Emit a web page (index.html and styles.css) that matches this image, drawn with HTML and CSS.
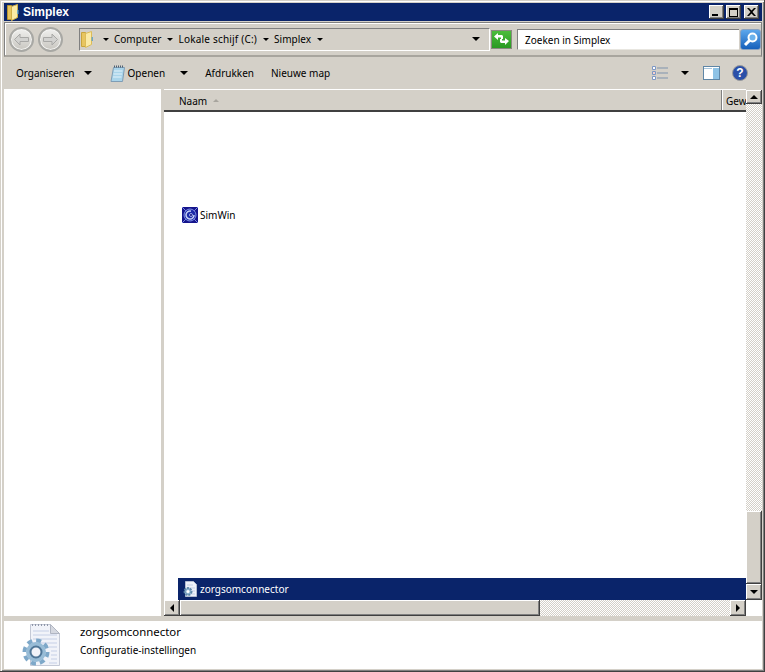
FILE: index.html

```html
<!DOCTYPE html>
<html lang="nl">

<head>
    <meta charset="UTF-8">
    <meta name="viewport" content="width=device-width, initial-scale=1.0">
    <title>Simplex</title>
    <link rel="stylesheet" href="styles.css">
</head>

<body>
    <div class="venster">
        <!-- Titelbalk -->
        <header class="titelbalk">
            <svg class="map-klein" width="12" height="17" viewBox="0 0 12 17">
                <path d="M.5 1.500h4v14h-4z" fill="#e8c560" stroke="#b8952f" />
                <path d="M4.500 2.500l6-2v13l-6 3z" fill="#fbeaa6" stroke="#d1ae48" />
                <path d="M10 6h1.500v4H10z" fill="#6ea7c4" />
            </svg>
            <span class="titel">Simplex</span>
            <div class="vensterknoppen">
                <button class="vknop"><span class="min"></span></button>
                <button class="vknop"><span class="max"></span></button>
                <button class="vknop sluit">
                    <svg width="9" height="8" viewBox="0 0 9 8">
                        <path d="M0 0h2l2.500 2.500L7 0h2L5.500 4 9 8H7L4.500 5.500 2 8H0l3.500-4z" fill="#000" />
                    </svg>
                </button>
            </div>
        </header>

        <!-- Adresbalk -->
        <div class="adresbalk">
            <div class="navknoppen">
                <span class="rondknop">
                    <svg width="17" height="13" viewBox="0 0 17 13"><path d="M1.500 6.500L7 1v3.500h8.500v4H7V12z" fill="#d2d2d0" stroke="#a8a8a6" /></svg>
                </span>
                <span class="rondknop">
                    <svg width="17" height="13" viewBox="0 0 17 13"><path d="M15.500 6.500L10 1v3.500H1.500v4H10V12z" fill="#d2d2d0" stroke="#a8a8a6" /></svg>
                </span>
            </div>
            <div class="pad">
                <svg class="map-pad" width="13" height="17" viewBox="0 0 13 17">
                    <path d="M.5 1.500h4v14h-4z" fill="#e8c560" stroke="#c9a53c" />
                    <path d="M4.500 2.500l6-2v13l-6 3z" fill="#fbeaa6" stroke="#dcbc58" />
                    <path d="M10.500 6H12v4h-1.500z" fill="#6ea7c4" />
                </svg>
                <span class="pijl pad-pijl"></span><span class="kruimel">Computer</span>
                <span class="pijl pad-pijl"></span><span class="kruimel kruimel-schijf">Lokale schijf (C:)</span>
                <span class="pijl pad-pijl"></span><span class="kruimel">Simplex</span>
                <span class="pijl pad-pijl"></span>
                <span class="pijl pad-einde"></span>
            </div>
            <span class="ververs">
                <svg width="17" height="14" viewBox="0 0 17 14">
                    <path d="M1 4.500L5 1v2h4l1 1v3H8V5.500H5V8z" fill="#fff" />
                    <path d="M16 9l-4 4v-2H8L7 10V7h2v1.500h3V6z" fill="#fff" />
                </svg>
            </span>
            <div class="zoeken">Zoeken in Simplex</div>
            <span class="zoekknop">
                <svg width="17" height="17" viewBox="0 0 17 17">
                    <circle cx="10.500" cy="6.500" r="4" fill="#6cb2ec" stroke="#fff" stroke-width="2" />
                    <path d="M7.500 9.500L3 14" stroke="#fff" stroke-width="3" />
                </svg>
            </span>
        </div>

        <!-- Werkbalk -->
        <nav class="werkbalk">
            <span class="wk-item">Organiseren</span>
            <span class="pijl wk-pijl"></span>
            <svg class="notitie" width="15" height="17" viewBox="0 0 15 17">
                <path d="M3.500 2.500h11l-2 14H1z" fill="#a9d4ea" stroke="#7f9db5" />
                <path d="M4 6h8.500M3.500 9H12M3 12h8.500" stroke="#e4f2fa" />
                <path d="M4 1.500h10" stroke="#4d5f72" stroke-dasharray="1 1" stroke-width="2" />
            </svg>
            <span class="wk-item openen">Openen</span>
            <span class="pijl wk-pijl"></span>
            <span class="wk-item afdrukken">Afdrukken</span>
            <span class="wk-item">Nieuwe map</span>
            <div class="wk-rechts">
                <svg width="16" height="14" viewBox="0 0 16 14">
                    <path d="M.5 .5h3v3h-3zM.5 5.500h3v3h-3zM.5 10.500h3v3h-3z" fill="#fff" stroke="#7d97c4" />
                    <path d="M1.500 6.500h1v1h-1z" fill="#d84a3c" />
                    <path d="M5 2h11M5 7h11M5 12h11" stroke="#7f93ad" />
                </svg>
                <span class="pijl weergave-pijl"></span>
                <svg class="paneel" width="17" height="14" viewBox="0 0 17 14">
                    <rect x="0.500" y="0.500" width="16" height="13" fill="#fff" stroke="#5f86a6" />
                    <rect x="10" y="2" width="6" height="11" fill="#8fc3e6" />
                    <path d="M1 2.500h8" stroke="#a9c6dc" />
                </svg>
                <span class="help">?</span>
            </div>
        </nav>

        <!-- Inhoud -->
        <main class="inhoud">
            <aside class="zijbalk"></aside>
            <section class="lijst">
                <div class="lijst-midden">
                    <div class="bestanden">
                        <div class="kolomkop">
                            <div class="kop kop-naam">Naam <span class="sorteer"></span></div>
                            <div class="kop kop-gew">Gew</div>
                        </div>
                        <div class="rijen">
                            <div class="rij rij-simwin">
                                <svg width="16" height="16" viewBox="0 0 16 16">
                                    <rect width="16" height="16" fill="#14148c" />
                                    <path d="M0 0l4 4M16 0l-4 4M0 16l4-4M16 16l-4-4" stroke="#7b88e0" />
                                    <circle cx="8" cy="8" r="6" fill="#1c2aa8" stroke="#7f90e4" />
                                    <path d="M12 8a4 4 0 1 1-3-3.800" fill="none" stroke="#c5cff5" stroke-width="1.500" />
                                    <circle cx="9" cy="8" r="1.500" fill="#0c0c70" stroke="#9aa8ec" />
                                </svg>
                                <span>SimWin</span>
                            </div>
                            <div class="rij rij-zorg">
                                <svg width="16" height="16" viewBox="0 0 16 16">
                                    <path d="M3.500 .5h8l3 3v12h-11z" fill="#eef2fa" stroke="#b3bcd0" />
                                    <path d="M5 4h6M7 7h6M9 10h4M9 13h4" stroke="#c5cfe6" />
                                    <circle cx="6" cy="10.500" r="3.500" fill="#8fb4d1" stroke="#5f88a8" stroke-width="2" stroke-dasharray="2 1" />
                                    <circle cx="6" cy="10.500" r="1.500" fill="#fff" />
                                </svg>
                                <span>zorgsomconnector</span>
                            </div>
                        </div>
                    </div>
                    <div class="vscroll">
                        <span class="sknop sknop-boven"><span class="driehoek omhoog"></span></span>
                        <span class="sbaan"></span>
                        <span class="sduim vduim"></span>
                        <span class="sknop"><span class="driehoek omlaag"></span></span>
                    </div>
                </div>
                <div class="hscroll">
                    <span class="sknop"><span class="driehoek links"></span></span>
                    <span class="sduim hduim"></span>
                    <span class="sbaan"></span>
                    <span class="sknop"><span class="driehoek rechts"></span></span>
                    <span class="hoekje"></span>
                </div>
            </section>
        </main>

        <!-- Details -->
        <footer class="details">
            <svg class="groot-icoon" width="42" height="44" viewBox="0 0 42 44">
                <path d="M11.500 1.500h20l9 9v32h-29z" fill="#f1f3f9" stroke="#c4c9d6" />
                <path d="M31.500 1.500v9h9z" fill="#d5d8e0" stroke="#b0b5c2" />
                <path d="M14 8h16M14 12h24M14 16h24M14 20h24M30 24h8M32 28h6M32 32h6M32 36h6M30 40h8" stroke="#c5cfe6" />
                <path d="M13 2h16" stroke="#8f97a8" stroke-dasharray="1 2" stroke-width="2" />
                <circle cx="17" cy="29" r="11.500" fill="none" stroke="#7ea8c9" stroke-width="4" stroke-dasharray="5 4" />
                <circle cx="17" cy="29" r="10" fill="#98bcd6" />
                <circle cx="17" cy="29" r="5.500" fill="#f1f3f9" stroke="#4f7697" stroke-width="2" />
            </svg>
            <div class="details-tekst">
                <div class="details-naam">zorgsomconnector</div>
                <div class="details-type">Configuratie-instellingen</div>
            </div>
        </footer>
    </div>
</body>

</html>
```

FILE: styles.css

```css
/* Algemeen */

html,
body {
    margin: 0;
    padding: 0;
    height: 100%;
    overflow: hidden;
    font-family: "Noto Sans", "Open Sans", sans-serif;
    font-size: 10px;
    color: #000;
    background-color: #d4d0c8;
}

.venster {
    box-sizing: border-box;
    width: 765px;
    height: 672px;
    padding: 3px 2px 2px 4px;
    display: flex;
    flex-direction: column;
    background-color: #d4d0c8;
    border-right: 1px solid #404040;
    border-bottom: 1px solid #404040;
    box-shadow: inset 1px 1px 0 #d4d0c8, inset 2px 2px 0 #fff, inset -1px -1px 0 #808080;
}

/* Titelbalk */

.titelbalk {
    height: 18px;
    flex: none;
    display: flex;
    align-items: center;
    padding-left: 3px;
    background-color: #0a246a;
    color: #fff;
}

.map-klein {
    flex: none;
}

.titel {
    margin-left: 4px;
    font-family: "Liberation Sans", Arial, sans-serif;
    font-weight: bold;
    font-size: 12px;
}

.vensterknoppen {
    margin-left: auto;
    margin-right: 3px;
    display: flex;
    gap: 2px;
}

.vknop {
    box-sizing: border-box;
    width: 15px;
    height: 14px;
    padding: 0;
    border: 0;
    display: flex;
    align-items: center;
    justify-content: center;
    background-color: #d4d0c8;
    box-shadow: inset -1px -1px 0 #404040, inset 1px 1px 0 #fff, inset -2px -2px 0 #808080;
}

.sluit {
    margin-left: 1px;
}

.min {
    display: block;
    width: 6px;
    height: 2px;
    margin: 6px 4px 0 0;
    background-color: #000;
}

.max {
    box-sizing: border-box;
    display: block;
    width: 9px;
    height: 9px;
    border: 1px solid #000;
    border-top-width: 2px;
}

/* Adresbalk */

.adresbalk {
    box-sizing: border-box;
    height: 35px;
    flex: none;
    margin-top: 1px;
    padding: 0 0 0 4px;
    display: flex;
    align-items: center;
    border: 1px solid #808080;
    border-bottom: 2px solid #a8a59e;
    box-shadow: inset 1px 1px 0 #fff;
}

.navknoppen {
    display: flex;
    flex: none;
    gap: 4px;
    margin-right: 16px;
}

.rondknop {
    box-sizing: border-box;
    width: 25px;
    height: 25px;
    border-radius: 50%;
    display: flex;
    align-items: center;
    justify-content: center;
    background: linear-gradient(#f0f0ee, #c8c6c0);
    border: 2px solid #a8a8a4;
    box-shadow: inset 0 0 0 1px #f4f4f2;
}

.pad {
    box-sizing: border-box;
    width: 411px;
    height: 23px;
    flex: none;
    display: flex;
    align-items: center;
    border-left: 1px solid #808080;
    border-top: 1px solid #808080;
    border-bottom: 1px solid #fff;
    border-right: 1px solid #fff;
    padding-left: 1px;
}

.map-pad {
    flex: none;
    margin-right: 9px;
}

.kruimel {
    margin-right: 6px;
    white-space: nowrap;
}

.kruimel-schijf {
    letter-spacing: 0.2px;
}

.pijl {
    display: block;
    flex: none;
    width: 0;
    height: 0;
    border-left: 3px solid transparent;
    border-right: 3px solid transparent;
    border-top: 3px solid #000;
}

.pad-pijl {
    margin-right: 5px;
}

.pad-einde {
    margin-left: auto;
    margin-right: 9px;
    border-left-width: 4px;
    border-right-width: 4px;
    border-top-width: 4px;
}

.ververs {
    box-sizing: border-box;
    width: 21px;
    height: 19px;
    flex: none;
    margin-left: 1px;
    display: flex;
    align-items: center;
    justify-content: center;
    background: linear-gradient(#4cbc3c, #2a9a22);
    border: 1px solid #8a8a80;
}

.zoeken {
    box-sizing: border-box;
    width: 222px;
    height: 21px;
    flex: none;
    margin-left: 5px;
    padding-left: 7px;
    line-height: 21px;
    background-color: #fff;
    border-left: 1px solid #808080;
    border-top: 1px solid #808080;
    border-bottom: 1px solid #e8e6e0;
    white-space: nowrap;
}

.zoekknop {
    box-sizing: border-box;
    width: 21px;
    height: 21px;
    flex: none;
    margin-left: 1px;
    display: flex;
    align-items: center;
    justify-content: center;
    border-radius: 3px;
    background: linear-gradient(#5da7ec, #1660bb);
    border: 1px solid #8aa2c0;
}

/* Werkbalk */

.werkbalk {
    box-sizing: border-box;
    height: 32px;
    flex: none;
    display: flex;
    align-items: center;
    padding-left: 12px;
}

.wk-item {
    white-space: nowrap;
}

.wk-pijl {
    margin-left: 9px;
    border-left-width: 4px;
    border-right-width: 4px;
    border-top-width: 4px;
}

.notitie {
    margin-left: 18px;
    margin-right: 3px;
}

.wk-pijl + .wk-item {
    margin-left: 17px;
}

.wk-item.openen + .wk-pijl {
    margin-left: 15px;
}

.afdrukken {
    margin-right: 17px;
}

.wk-rechts {
    margin-left: auto;
    margin-right: 14px;
    display: flex;
    align-items: center;
}

.weergave-pijl {
    margin-left: 13px;
    border-left-width: 4px;
    border-right-width: 4px;
    border-top-width: 4px;
}

.paneel {
    margin-left: 14px;
}

.help {
    box-sizing: border-box;
    width: 16px;
    height: 16px;
    margin-left: 12px;
    border-radius: 50%;
    display: block;
    text-align: center;
    line-height: 14px;
    font-family: "Liberation Sans", Arial, sans-serif;
    font-size: 12px;
    font-weight: bold;
    color: #fff;
    background-color: #2a4fa8;
    border: 1px solid #9a9a9a;
}

/* Inhoud */

.inhoud {
    flex: 1;
    min-height: 0;
    display: flex;
    gap: 3px;
}

.zijbalk {
    width: 157px;
    flex: none;
    background-color: #fff;
}

.lijst {
    flex: 1;
    min-width: 0;
    display: flex;
    flex-direction: column;
}

.lijst-midden {
    flex: 1;
    min-height: 0;
    display: flex;
}

.bestanden {
    flex: 1;
    min-width: 0;
    display: flex;
    flex-direction: column;
    background-color: #fff;
}

.kolomkop {
    box-sizing: border-box;
    height: 23px;
    flex: none;
    display: flex;
    border-top: 1px solid #fff;
    border-bottom: 2px solid #404040;
    background-color: #d4d0c8;
}

.kop {
    line-height: 22px;
    white-space: nowrap;
    overflow: hidden;
}

.kop-naam {
    flex: 1;
    padding-left: 15px;
}

.kop-gew {
    box-sizing: border-box;
    width: 25px;
    flex: none;
    padding-left: 4px;
    border-left: 1px solid #808080;
    box-shadow: inset 1px 0 0 #fff;
}

.sorteer {
    display: inline-block;
    width: 0;
    height: 0;
    margin: 0 0 3px 3px;
    border-left: 3px solid transparent;
    border-right: 3px solid transparent;
    border-bottom: 3px solid #a8a59e;
}

.rijen {
    flex: 1;
    min-height: 0;
    display: flex;
    flex-direction: column;
    justify-content: space-between;
    padding: 92px 0 0 14px;
}

.rij {
    display: flex;
    align-items: center;
    gap: 2px;
    height: 22px;
    flex: none;
}

.rij svg {
    flex: none;
}

.rij-simwin {
    padding-left: 4px;
    color: #000;
}

.rij-zorg {
    padding-left: 4px;
    background-color: #0a246a;
    color: #fff;
}

/* Schuifbalken */

.vscroll {
    width: 16px;
    flex: none;
    padding-top: 1px;
    display: flex;
    flex-direction: column;
}

.hscroll {
    height: 16px;
    flex: none;
    display: flex;
}

.sknop,
.sduim {
    box-sizing: border-box;
    display: flex;
    align-items: center;
    justify-content: center;
    flex: none;
    background-color: #d4d0c8;
    box-shadow: inset -1px -1px 0 #404040, inset 1px 1px 0 #fff, inset -2px -2px 0 #808080;
}

.sknop {
    width: 16px;
    height: 16px;
}

.sknop-boven {
    height: 14px;
}

.sbaan {
    flex: 1;
    background-color: #ecebe8;
    background-image: repeating-conic-gradient(#d4d0c8 0 25%, #fff 0 50%);
    background-size: 2px 2px;
}

.vduim {
    height: 73px;
    width: 16px;
}

.hduim {
    width: 360px;
    height: 16px;
}

.hoekje {
    width: 16px;
    flex: none;
    background-color: #fff;
}

.driehoek {
    display: block;
    width: 0;
    height: 0;
}

.omhoog,
.omlaag {
    border-left: 4px solid transparent;
    border-right: 4px solid transparent;
}

.omhoog {
    border-bottom: 4px solid #000;
}

.omlaag {
    border-top: 4px solid #000;
}

.links,
.rechts {
    border-top: 4px solid transparent;
    border-bottom: 4px solid transparent;
}

.links {
    border-right: 4px solid #000;
}

.rechts {
    border-left: 4px solid #000;
}

/* Details */

.details {
    box-sizing: border-box;
    height: 48px;
    flex: none;
    margin-top: 5px;
    display: flex;
    align-items: center;
    padding-left: 15px;
    background-color: #fff;
}

.groot-icoon {
    flex: none;
}

.details-tekst {
    margin-left: 19px;
    margin-top: -9px;
}

.details-naam {
    font-size: 11.4px;
    line-height: 20px;
}

.details-type {
    line-height: 17px;
}
```
